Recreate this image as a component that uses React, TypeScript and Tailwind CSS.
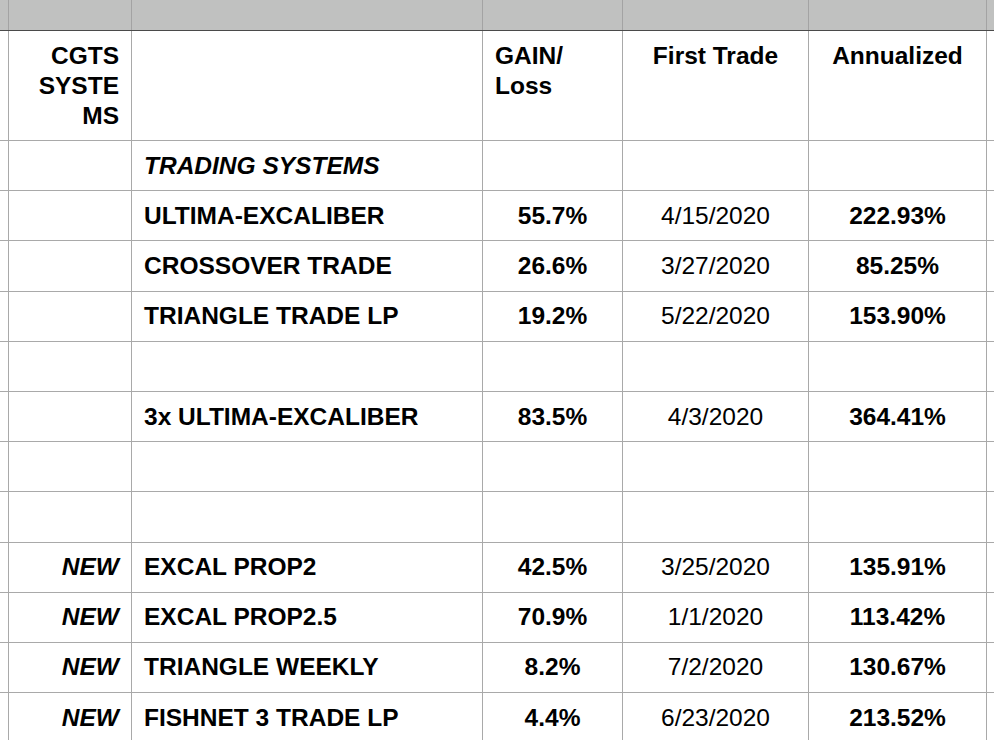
type Row = {
  tag?: string
  name?: string
  italic?: boolean
  gain?: string
  first?: string
  annual?: string
}

const rows: Row[] = [
  { name: 'TRADING SYSTEMS', italic: true },
  { name: 'ULTIMA-EXCALIBER', gain: '55.7%', first: '4/15/2020', annual: '222.93%' },
  { name: 'CROSSOVER TRADE', gain: '26.6%', first: '3/27/2020', annual: '85.25%' },
  { name: 'TRIANGLE TRADE LP', gain: '19.2%', first: '5/22/2020', annual: '153.90%' },
  {},
  { name: '3x ULTIMA-EXCALIBER', gain: '83.5%', first: '4/3/2020', annual: '364.41%' },
  {},
  {},
  { tag: 'NEW', name: 'EXCAL PROP2', gain: '42.5%', first: '3/25/2020', annual: '135.91%' },
  { tag: 'NEW', name: 'EXCAL PROP2.5', gain: '70.9%', first: '1/1/2020', annual: '113.42%' },
  { tag: 'NEW', name: 'TRIANGLE WEEKLY', gain: '8.2%', first: '7/2/2020', annual: '130.67%' },
  { tag: 'NEW', name: 'FISHNET 3 TRADE LP', gain: '4.4%', first: '6/23/2020', annual: '213.52%' },
]

const cols = 'grid grid-cols-[9px_123px_351px_140px_186px_178px_1fr]'
const cell = 'border-r border-b border-[#a9a9a9]'

/** spreadsheet-like results table */
export default function App() {
  return (
    <div className="w-[994px] h-[740px] overflow-hidden bg-white text-black font-['Liberation_Sans',Arial,sans-serif] text-[24.5px] leading-[30px]">
      {/* column header strip */}
      <div className={`${cols} h-[31px] bg-[#c0c1c0] border-b border-[#4a4a4a]`}>
        <div className="border-r border-[#a3a3a3]" />
        <div className="border-r border-[#a3a3a3]" />
        <div className="border-r border-[#a3a3a3]" />
        <div className="border-r border-[#a3a3a3]" />
        <div className="border-r border-[#a3a3a3]" />
        <div className="border-r border-[#a3a3a3]" />
        <div />
      </div>

      <div className={`${cols} h-[110px] font-bold`}>
        <div className={cell} />
        <div className={`${cell} pt-[10px] pr-[12px] text-right`}>
          CGTS
          <br />
          SYSTE
          <br />
          MS
        </div>
        <div className={cell} />
        <div className={`${cell} pt-[10px] pl-[12px]`}>
          GAIN/
          <br />
          Loss
        </div>
        <div className={`${cell} pt-[10px] text-center`}>First Trade</div>
        <div className={`${cell} pt-[10px] text-center`}>Annualized</div>
        <div className="border-b border-[#a9a9a9]" />
      </div>

      {rows.map((r, i) => (
        <div key={i} className={`${cols} h-[50.2px]`}>
          <div className={cell} />
          <div className={`${cell} flex items-center justify-end pr-[12px] font-bold italic`}>{r.tag}</div>
          <div className={`${cell} flex items-center pl-[12px] font-bold ${r.italic ? 'italic' : ''}`}>{r.name}</div>
          <div className={`${cell} flex items-center justify-center font-bold`}>{r.gain}</div>
          <div className={`${cell} flex items-center justify-center`}>{r.first}</div>
          <div className={`${cell} flex items-center justify-center font-bold`}>{r.annual}</div>
          <div className="border-b border-[#a9a9a9]" />
        </div>
      ))}
    </div>
  )
}
